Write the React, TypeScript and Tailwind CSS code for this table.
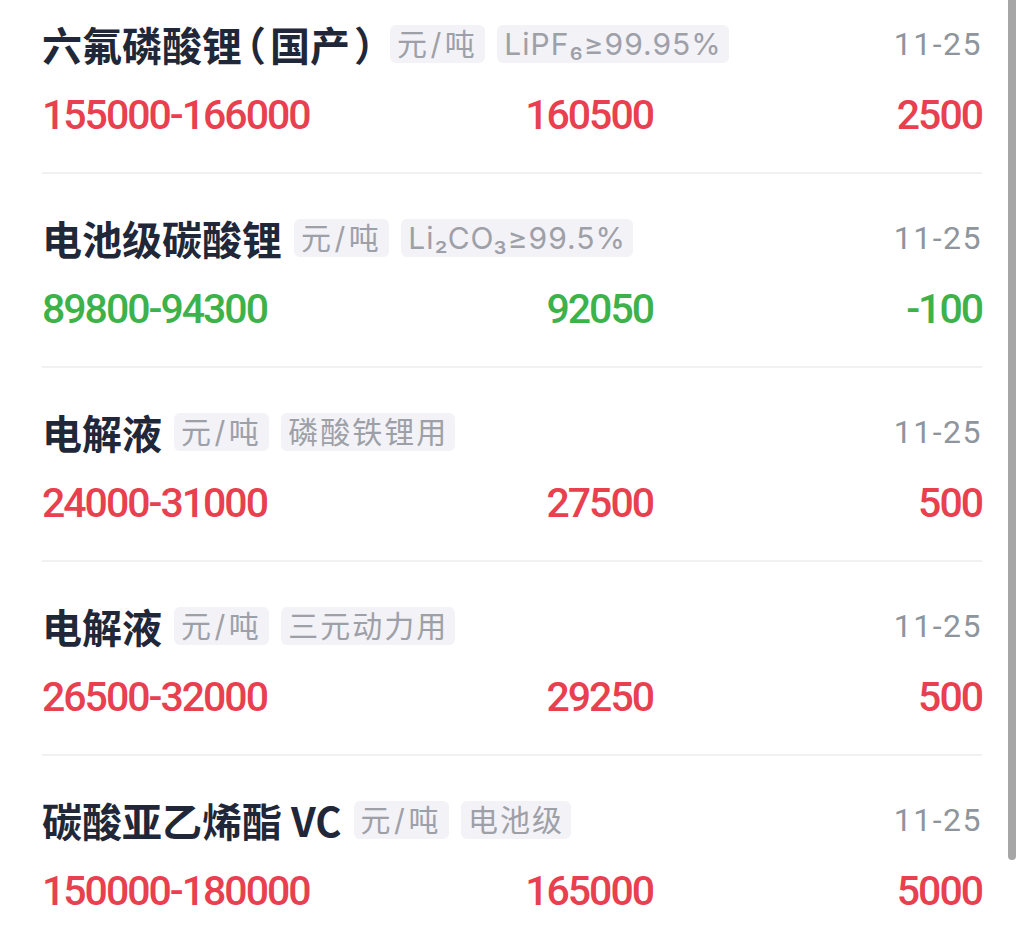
type Row = {
  name: string;
  tags: string[];
  date: string;
  range: string;
  avg: string;
  change: string;
  up: boolean;
};

const ROWS: Row[] = [
  { name: '六氟磷酸锂（国产）', tags: ['元/吨', 'LiPF₆≥99.95%'], date: '11-25', range: '155000-166000', avg: '160500', change: '2500', up: true },
  { name: '电池级碳酸锂', tags: ['元/吨', 'Li₂CO₃≥99.5%'], date: '11-25', range: '89800-94300', avg: '92050', change: '-100', up: false },
  { name: '电解液', tags: ['元/吨', '磷酸铁锂用'], date: '11-25', range: '24000-31000', avg: '27500', change: '500', up: true },
  { name: '电解液', tags: ['元/吨', '三元动力用'], date: '11-25', range: '26500-32000', avg: '29250', change: '500', up: true },
  { name: '碳酸亚乙烯酯 VC', tags: ['元/吨', '电池级'], date: '11-25', range: '150000-180000', avg: '165000', change: '5000', up: true },
];

// parens in the name get a little extra room, like the app's proportional punctuation
const Name = ({ text }: { text: string }) => (
  <span className="text-[40px] leading-[44px] font-bold text-[#1f2738] [font-feature-settings:'halt'] font-['Noto_Sans_CJK_SC',sans-serif]">
    {text.split(/([（）])/).map((part, i) =>
      part === '（' || part === '）' ? (
        <span key={i} className="px-[4px]">
          {part}
        </span>
      ) : (
        part
      ),
    )}
  </span>
);

const Tag = ({ text }: { text: string }) => {
  const latin = /[A-Za-z]/.test(text);
  const spacing = latin ? 'tracking-[1px]' : text === '元/吨' ? 'tracking-[3.5px]' : 'tracking-[2px]';

  return (
    <span
      className={`ml-3 flex h-[38px] items-center rounded-md bg-[#f2f2f7] px-[7px] text-[30px] text-[#9ea0a7] font-['Inter','Noto_Sans_CJK_SC',sans-serif] ${spacing}`}
    >
      {text}
    </span>
  );
};

const PriceRow = ({ row }: { row: Row }) => {
  const color = row.up ? 'text-[#e8404f]' : 'text-[#3db24a]';

  return (
    <div className="h-[194px] border-b-2 border-[#f1f1f1] pt-[42px]">
      <div className="flex h-[44px] items-center">
        <Name text={row.name} />
        {row.tags.map((tag) => (
          <Tag key={tag} text={tag} />
        ))}
        <span className="ml-auto text-[32px] tracking-[1.5px] text-[#8f959c] font-['Roboto',sans-serif]">
          {row.date}
        </span>
      </div>
      <div
        className={`mt-[25px] grid h-[48px] grid-cols-[371px_240px_1fr] items-center text-[41px] leading-[48px] font-medium tracking-[-2px] font-['Roboto',sans-serif] ${color}`}
      >
        <span>{row.range}</span>
        <span className="text-right">{row.avg}</span>
        <span className="text-right">{row.change}</span>
      </div>
    </div>
  );
};

const App = () => {
  return (
    <div className="relative h-[940px] w-[1024px] overflow-hidden bg-white">
      <div className="-mt-5 px-[42px]">
        {ROWS.map((row, i) => (
          <PriceRow key={i} row={row} />
        ))}
      </div>
      <div className="absolute right-[8px] top-0 h-[860px] w-[8px] rounded-b-full bg-[#a6a6a6]" />
    </div>
  );
};

export default App;
